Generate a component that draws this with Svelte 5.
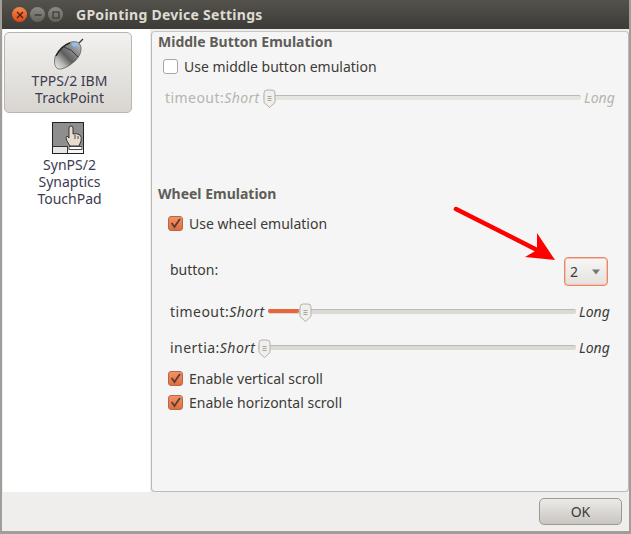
<script>
  const devices = [
    { name: ["TPPS/2 IBM", "TrackPoint"], kind: "mouse", active: true },
    { name: ["SynPS/2", "Synaptics", "TouchPad"], kind: "pad", active: false }
  ];
  let middle = $state(false);
  let wheel = $state(true);
  let vertical = $state(true);
  let horizontal = $state(true);
</script>

{#snippet check(on, label, extra)}
  <label class="check {extra}">
    <input type="checkbox" bind:checked={on.v} />
    <span class="box" class:on={on.v}>
      {#if on.v}
        <svg width="13" height="13" viewBox="0 0 13 13"><path d="M2.5 6 L5.5 10 L11 2" fill="none" stroke="#f9c9ae" stroke-width="1" transform="translate(0 1)"/><path d="M2.5 6 L5.5 10 L11 2" fill="none" stroke="#5a3f32" stroke-width="2"/></svg>
      {/if}
    </span>
    <span>{label}</span>
  </label>
{/snippet}

{#snippet slider(label, pct, disabled, cls)}
  <div class="slider {cls}" class:disabled>
    <span class="lab">{label}:<em>Short</em></span>
    <div class="track">
      <div class="fill" style="width: {pct}%"></div>
      <svg class="thumb" style="left: {pct}%" width="13" height="20" viewBox="0 0 13 20">
        <path d="M1 4 Q1 1 4 1 H9 Q12 1 12 4 V13.5 L6.5 18.5 L1 13.5 Z" fill="#f1efec" stroke="#b5b1ab"/>
        <path d="M4.5 7.5H8.5M4.5 9.5H8.5M4.5 11.5H8.5" stroke="#a8a49e" stroke-width="1"/>
      </svg>
    </div>
    <em class="long">Long</em>
  </div>
{/snippet}

<div class="window">
  <header class="titlebar">
    <div class="controls">
      <span class="ctl close"><svg width="8" height="8" viewBox="0 0 8 8"><path d="M1 1L7 7M7 1L1 7" stroke="#43210f" stroke-width="1.3"/></svg></span>
      <span class="ctl"><svg width="8" height="8" viewBox="0 0 8 8"><path d="M0.5 4H7.5" stroke="#3b3a36" stroke-width="1.4"/></svg></span>
      <span class="ctl"><svg width="8" height="8" viewBox="0 0 8 8"><rect x="1" y="1" width="6" height="6" fill="none" stroke="#3b3a36" stroke-width="1.2"/></svg></span>
    </div>
    <span class="title">GPointing Device Settings</span>
  </header>

  <div class="body">
    <aside class="sidebar">
      {#each devices as d}
        <div class="device" class:active={d.active}>
          {#if d.kind === "mouse"}
            <svg class="icon-mouse" width="30" height="33" viewBox="0 0 30 33">
              <defs>
                <linearGradient id="m" x1="0" y1="1" x2="1" y2="0">
                  <stop offset="0" stop-color="#f6f6f2"/>
                  <stop offset="0.25" stop-color="#b4b4b2"/>
                  <stop offset="0.45" stop-color="#5e5e5c"/>
                  <stop offset="0.7" stop-color="#8a8c8e"/>
                  <stop offset="1" stop-color="#c4c8cc"/>
                </linearGradient>
              </defs>
              <path d="M24 7 L29 2" stroke="#333" stroke-width="1.2"/>
              <path d="M17 5 Q25 3 27 10 Q28 17 21 24 Q11 33 4 32 Q-1 29 1 20 Q6 9 17 5Z" fill="url(#m)" stroke="#3a3a3a" stroke-width="0.6"/>
              <path d="M2 19 Q7 9 16 6" fill="none" stroke="#2a2a2a" stroke-width="1.6"/>
              <path d="M10 10 Q18 12 24 20" fill="none" stroke="#3a3a3a" stroke-width="1"/>
              <ellipse cx="21" cy="7.5" rx="3.2" ry="2" fill="#8ec0ee"/>
            </svg>
          {:else}
            <svg width="32" height="32" viewBox="0 0 32 32">
              <rect x="0.5" y="0.5" width="31" height="31" fill="#8e8e8e" stroke="#222"/>
              <rect x="1" y="24" width="15" height="7" fill="#e6e6e6"/>
              <rect x="16" y="24" width="15" height="7" fill="#f6f6f6"/>
              <path d="M1 24.5H15M15.5 24V31" stroke="#333"/>
              <path d="M17 6 Q17 4 19 4 Q21 4 21 6 V12 Q25 11 28 13 Q30 15 29 19 L27 24 H18 L15 19 Q13 15 15 14 L17 16Z" fill="#e6ddd0" stroke="#2a2622" stroke-width="0.9"/>
              <path d="M23 13V17M26 14V17" stroke="#2a2622" stroke-width="0.8"/>
              <rect x="17" y="24.5" width="13" height="3" fill="#fff" stroke="#222" stroke-width="0.8"/>
            </svg>
          {/if}
          <div class="device-name">
            {#each d.name as line}<div>{line}</div>{/each}
          </div>
        </div>
      {/each}
    </aside>

    <main class="panel">
      <section class="group first">
        <h2>Middle Button Emulation</h2>
        {@render check({ get v() { return middle; }, set v(x) { middle = x; } }, "Use middle button emulation", "m-check")}
        {@render slider("timeout", 0, true, "m-slider")}
      </section>

      <section class="group second">
        <h2>Wheel Emulation</h2>
        {@render check({ get v() { return wheel; }, set v(x) { wheel = x; } }, "Use wheel emulation", "w-check")}
        <div class="button-row">
          <span>button:</span>
          <div class="combo">
            <span>2</span>
            <svg width="8" height="6" viewBox="0 0 8 6"><path d="M0 0.5H8L4 5.5Z" fill="#777"/></svg>
          </div>
        </div>
        {@render slider("timeout", 10, false, "t-slider")}
        {@render slider("inertia", 0, false, "i-slider")}
        {@render check({ get v() { return vertical; }, set v(x) { vertical = x; } }, "Enable vertical scroll", "v-check")}
        {@render check({ get v() { return horizontal; }, set v(x) { horizontal = x; } }, "Enable horizontal scroll", "h-check")}
      </section>
    </main>
  </div>

  <footer class="actions">
    <button class="ok">OK</button>
  </footer>

  <svg class="arrow" width="110" height="60" viewBox="0 0 110 60">
    <path d="M3 3 L88 46" stroke="#f00" stroke-width="4.5" stroke-linecap="round"/>
    <path d="M84 27 L102 54 L72 51 L84 44Z" fill="#f00"/>
  </svg>
</div>

<style>
  :global(body) {
    margin: 0;
    background: #9c9a94;
  }

  .window {
    position: relative;
    width: 631px;
    height: 534px;
    display: flex;
    flex-direction: column;
    font-family: "Noto Sans", sans-serif;
    font-size: 14px;
    color: #3c3b37;
    background: #f0eeec;
    overflow: hidden;
    box-sizing: border-box;
    border: solid #a09e98;
    border-width: 0 2px 3px 2px;
  }

  .titlebar {
    flex: none;
    height: 29px;
    margin: 0 -2px;
    display: flex;
    align-items: center;
    background: linear-gradient(#54524b, #3c3b37);
    color: #dfdbd2;
    font-size: 14px;
    font-weight: 700;
    letter-spacing: 0.27px;
  }

  .controls {
    display: flex;
    gap: 3px;
    margin-left: 12px;
    width: 64px;
  }

  .ctl {
    width: 15px;
    height: 15px;
    border-radius: 50%;
    background: linear-gradient(#8d8b85, #63615b);
    display: flex;
    align-items: center;
    justify-content: center;
  }

  .close {
    background: linear-gradient(#f5894f, #dd4814);
  }

  .body {
    flex: 1;
    min-height: 0;
    display: flex;
  }

  .sidebar {
    width: 147px;
    flex: none;
    background: #fff;
    padding-top: 3px;
    box-sizing: border-box;
    margin-left: 1px;
  }

  .device {
    width: 128px;
    margin-left: 1px;
    box-sizing: border-box;
    display: flex;
    flex-direction: column;
    align-items: center;
    color: #3c3b50;
    text-align: center;
    line-height: 17px;
    margin-bottom: 7px;
    padding-top: 2px;
  }

  .device.active {
    height: 81px;
    background: linear-gradient(#f2f1ef, #d9d6d1);
    border: 1px solid #b9b6b0;
    border-radius: 5px;
    padding-top: 4px;
  }

  .icon-mouse {
    margin-left: 2px;
  }

  .device-name {
    margin-top: 2px;
    padding-left: 3px;
  }

  .panel {
    flex: 1;
    margin: 2px 0 0 1px;
    background: #f5f5f5;
    border: 1px solid #bcbab5;
    border-top-color: #c8c6c1;
    border-radius: 4px;
    display: flex;
    flex-direction: column;
    padding-left: 6px;
    min-width: 0;
  }

  h2 {
    margin: 0;
    font-size: 14px;
    font-weight: 700;
    color: #5f5d58;
    line-height: 18px;
  }

  .group.first {
    padding-top: 1px;
    height: 153px;
    box-sizing: border-box;
  }

  .check {
    display: flex;
    align-items: center;
    gap: 6px;
    height: 20px;
  }

  .check input {
    display: none;
  }

  .box {
    width: 13px;
    height: 13px;
    border: 1px solid #a9a69f;
    border-radius: 3px;
    background: #fff;
    display: flex;
    align-items: center;
    justify-content: center;
    flex: none;
  }

  .box.on {
    background: linear-gradient(#f29368, #e56c3a);
    border-color: #b5674a;
  }

  .m-check {
    margin: 5px 0 0 5px;
  }

  .w-check {
    margin: 10px 0 0 10px;
  }

  .v-check {
    margin: 11px 0 0 10px;
  }

  .h-check {
    margin: 4px 0 0 10px;
  }

  .slider {
    display: flex;
    align-items: center;
    height: 20px;
    margin-right: 19px;
  }

  .slider em {
    font-style: italic;
  }

  .lab {
    flex: none;
    letter-spacing: 0.45px;
  }

  .track {
    position: relative;
    flex: 1;
    height: 4px;
    background: #dcdad6;
    border-top: 1px solid #bdbab4;
    border-radius: 2px;
    margin: 0 3px;
  }

  .fill {
    height: 4px;
    margin-top: -1px;
    background: #e8643a;
    border-radius: 2px;
  }

  .thumb {
    position: absolute;
    top: -7px;
  }

  .long {
    flex: none;
    width: 30px;
  }

  .m-slider {
    margin: 11px 14px 0 7px;
    color: #b6b4af;
  }

  .disabled .track {
    background: #e6e4e0;
  }

  .button-row {
    display: flex;
    align-items: center;
    justify-content: space-between;
    margin: 21px 20px 0 12px;
    height: 30px;
  }

  .combo {
    width: 44px;
    height: 29px;
    margin-top: 5px;
    box-sizing: border-box;
    border: 1px solid #e8866a;
    box-shadow: 0 0 0 1px #f3c3b2 inset;
    border-radius: 4px;
    background: linear-gradient(#f8f7f6, #e4e1dd);
    display: flex;
    align-items: center;
    justify-content: space-between;
    padding: 0 7px 0 5px;
  }

  .t-slider {
    margin-top: 17px;
    margin-left: 12px;
  }

  .i-slider {
    margin-top: 16px;
    margin-left: 12px;
  }

  .actions {
    flex: none;
    height: 39px;
    display: flex;
    align-items: flex-start;
    justify-content: flex-end;
    padding-top: 6px;
    box-sizing: border-box;
  }

  .ok {
    width: 83px;
    height: 27px;
    margin-right: 7px;
    font: inherit;
    color: #3c3b37;
    background: linear-gradient(#eceae7, #c9c6c1);
    border: 1px solid #9d9a94;
    border-radius: 5px;
    padding: 0;
  }

  .arrow {
    position: absolute;
    left: 451px;
    top: 206px;
  }
</style>
